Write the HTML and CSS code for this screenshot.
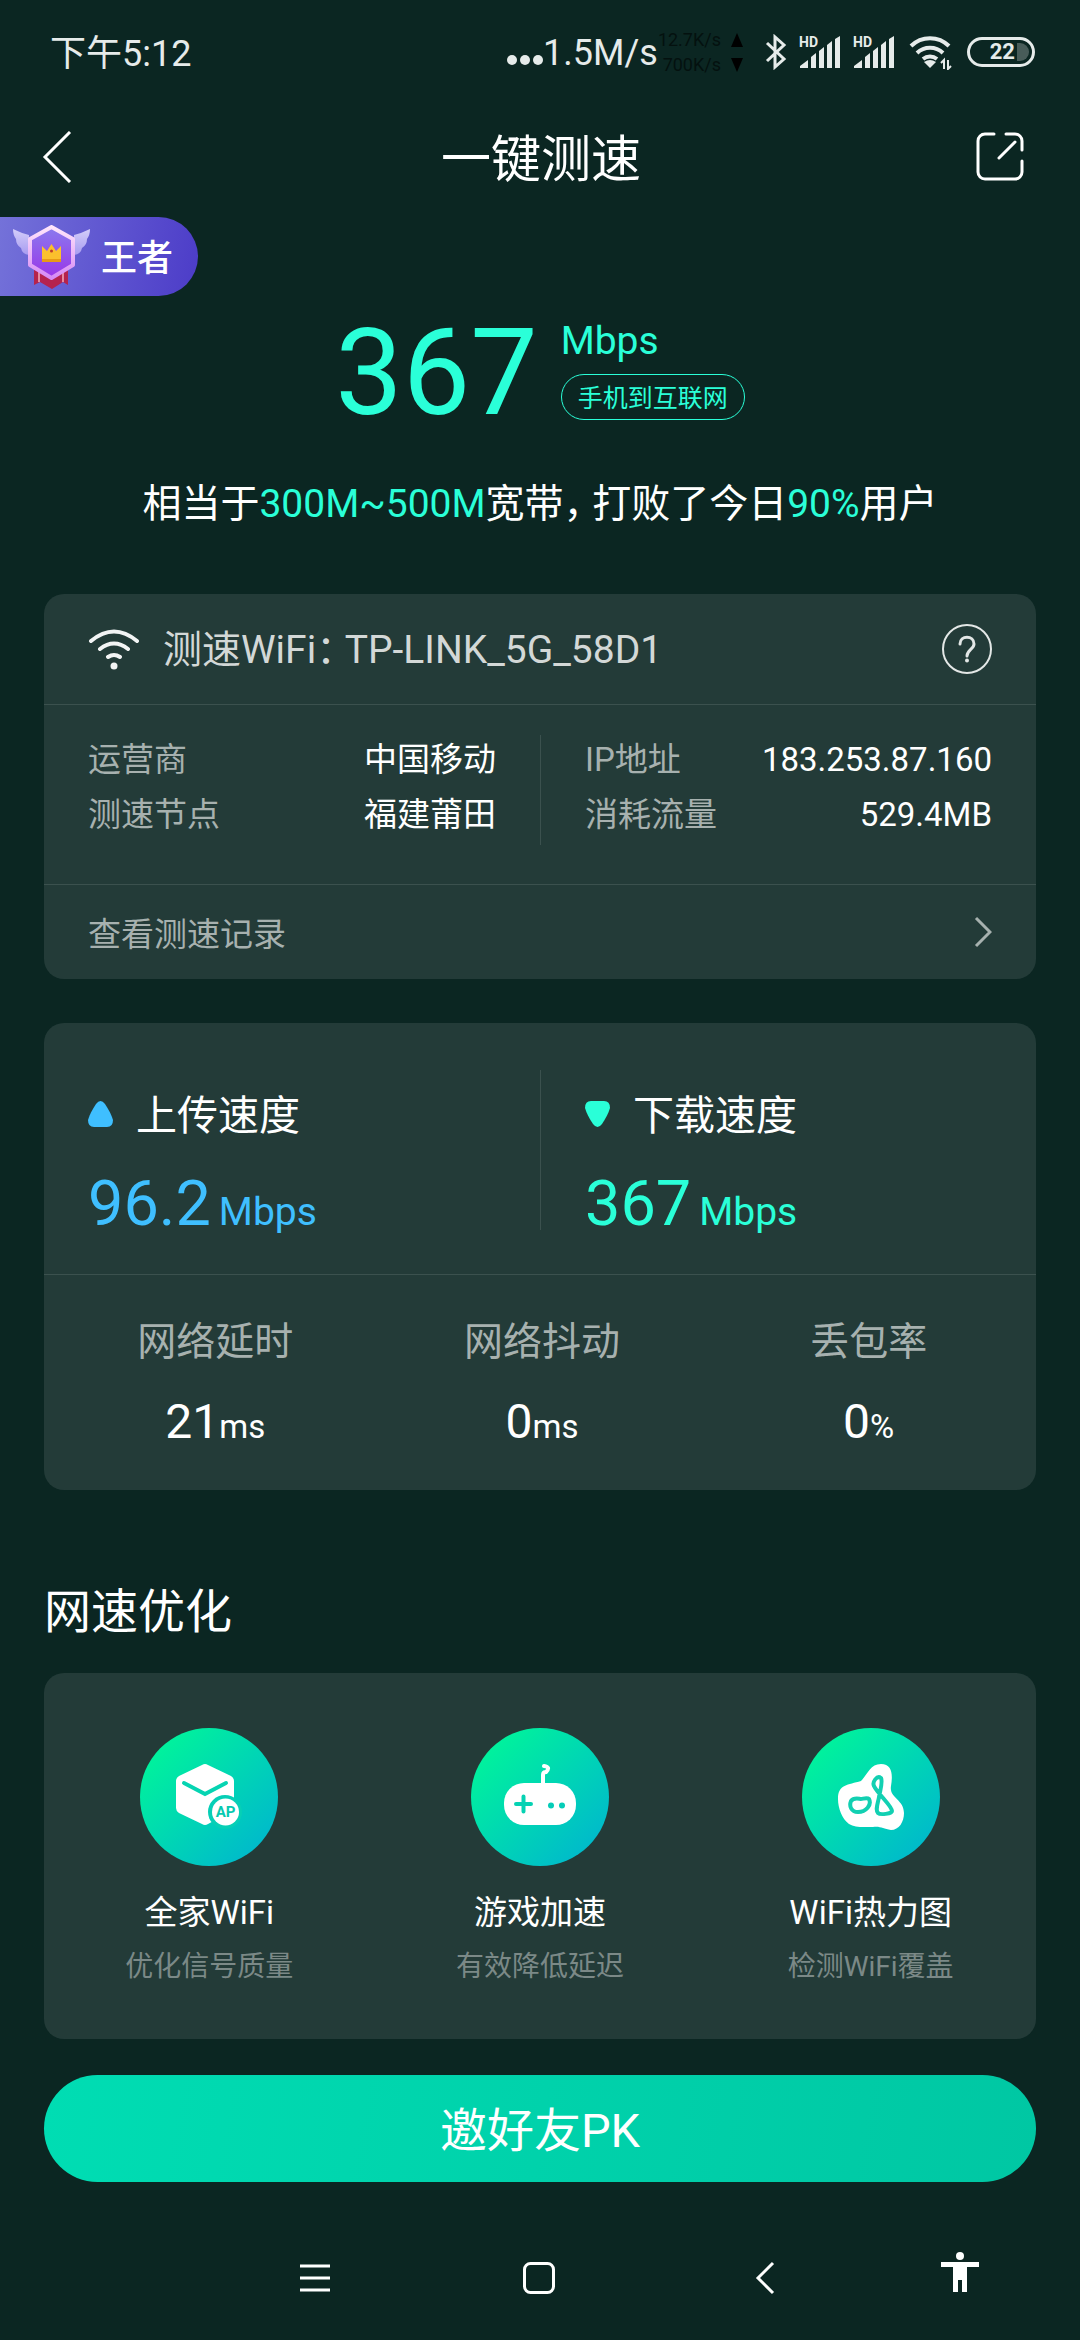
FILE: index.html
```html
<!DOCTYPE html>
<html lang="zh-CN">
<head>
<meta charset="utf-8">
<meta name="viewport" content="width=device-width, initial-scale=1">
<title>一键测速</title>
<link rel="stylesheet" href="styles.css">
</head>
<body>
<div class="status">
  <span class="status-time">下午5:12</span>
  <div class="status-right">
    <svg class="dots" width="36" height="36" viewBox="0 0 36 36" fill="currentColor"><circle cx="5" cy="26" r="5"/><circle cx="18" cy="26" r="5"/><circle cx="31" cy="26" r="5"/></svg>
    <span class="status-rate">1.5M/s</span>
    <div class="traffic">
      <span>12.7K/s</span><svg width="12" height="14" viewBox="0 0 12 14"><path d="M6 0l6 14H0z"/></svg>
      <span>700K/s</span><svg width="12" height="14" viewBox="0 0 12 14"><path d="M6 14L0 0h12z"/></svg>
    </div>
    <svg class="bluetooth" width="22" height="36" viewBox="0 0 22 36" fill="none" stroke="currentColor" stroke-width="3"><path d="M2 9l17 16-9 8V3l9 8L2 27"/></svg>
    <svg class="signal" width="42" height="34" viewBox="0 0 42 34" fill="currentColor"><path d="M1 33v-2l8-6v8zM12 33V22l5-4v15zM20 33V16l5-4v21zM28 33V10l5-4v27zM36 33V4l5-3v32z"/><text class="hd" x="0" y="12">HD</text></svg>
    <svg class="signal" width="42" height="34" viewBox="0 0 42 34" fill="currentColor"><path d="M1 33v-2l8-6v8zM12 33V22l5-4v15zM20 33V16l5-4v21zM28 33V10l5-4v27zM36 33V4l5-3v32z"/><text class="hd" x="0" y="12">HD</text></svg>
    <svg class="wlan" width="44" height="36" viewBox="0 0 44 36" fill="none" stroke="currentColor" stroke-width="4"><path d="M2 12a27 27 0 0 1 38 0M8 19a19 19 0 0 1 26 0M14 25a11 11 0 0 1 14 0"/><path d="M21 34l-6-6q6-4 12 0z" fill="currentColor" stroke="none"/><path d="M35 35v-9l-3 3M39 26v9l3-3" stroke-width="2"/></svg>
    <span class="battery"><span class="battery-level">22</span></span>
  </div>
</div>

<header class="topbar">
  <button class="icon-button" type="button" aria-label="返回"><svg width="32" height="52" viewBox="0 0 32 52" fill="none" stroke="currentColor" stroke-width="3"><path d="M28 1L3 26l25 25"/></svg></button>
  <h1>一键测速</h1>
  <button class="icon-button" type="button" aria-label="分享"><svg width="48" height="50" viewBox="0 0 48 50" fill="none" stroke="currentColor" stroke-width="3" stroke-linecap="round"><path d="M18 2H9a7 7 0 0 0-7 7v31a7 7 0 0 0 7 7h30a7 7 0 0 0 7-7V29M30 2h9a7 7 0 0 1 7 7v9M39 10L23 26"/></svg></button>
</header>

<main>
  <div class="rank">
    <svg width="78" height="64" viewBox="0 0 78 64">
      <defs>
        <linearGradient id="wing" x1="0" y1="0" x2="0" y2="1"><stop offset="0" stop-color="#d3cdfa"/><stop offset="1" stop-color="#a79bf0"/></linearGradient>
        <linearGradient id="gem" x1="0" y1="0" x2="0" y2="1"><stop offset="0" stop-color="#8a7bee"/><stop offset="1" stop-color="#9a35e8"/></linearGradient>
        <linearGradient id="rim" x1="0" y1="0" x2="0" y2="1"><stop offset="0" stop-color="#ffe6fb"/><stop offset="1" stop-color="#d68af5"/></linearGradient>
      </defs>
      <path d="M21 44h34v16l-5-3-11 7-12-7-6 3z" fill="#b5234d"/>
      <path d="M26 46v11M50 46v11" stroke="#e58aa0" stroke-width="2"/>
      <path d="M0 4q8 4 16 6v20q-7-1-8-7-5-3-5-9-3-4-3-10zM77 4q-8 4-16 6v20q7-1 8-7 5-3 5-9 3-4 3-10z" fill="url(#wing)"/>
      <path d="M38.500 2L60 14v26L38.500 53 17 40V14z" fill="url(#gem)" stroke="url(#rim)" stroke-width="4" stroke-linejoin="round"/>
      <path d="M29 21l5 5 4.500-7 4.500 7 5-5v16H29z" fill="#fbc02d"/><path d="M29 34h19v3H29z" fill="#e89a16"/><circle cx="38.500" cy="26" r="1.500" fill="#c0392b"/>
    </svg>
    <span>王者</span>
  </div>

  <section class="hero">
    <strong class="hero-number">367</strong>
    <div class="hero-side"><span class="unit">Mbps</span><span class="pill">手机到互联网</span></div>
  </section>
  <p class="summary">相当于<em>300M~500M</em>宽带<span class="tight">&#xFF0C;</span>打败了今日<em>90%</em>用户</p>

  <section class="card">
    <div class="wifi-row">
      <svg width="52" height="42" viewBox="0 0 52 42" fill="none" stroke="#f2f4f4" stroke-width="4" stroke-linecap="round"><path d="M3 13q23-19 46 0M12 21q14-11 28 0M20 29q6-4 12 0"/><circle cx="26" cy="38" r="3.500" fill="#f2f4f4" stroke="none"/></svg>
      <h2>测速WiFi<span class="tight">&#xFF1A;</span>TP-LINK_5G_58D1</h2>
      <button class="help" type="button" aria-label="帮助"><svg width="50" height="50" viewBox="0 0 50 50" fill="none" stroke="currentColor" stroke-width="2" stroke-linecap="round"><circle cx="25" cy="25" r="24"/><path d="M18 20c0-9 14-9 14 0 0 5-7 6-7 12" stroke-width="3"/><circle cx="25" cy="36.500" r="2" fill="currentColor" stroke="none"/></svg></button>
    </div>
    <div class="pair details">
      <dl>
        <div><dt>运营商</dt><dd>中国移动</dd></div>
        <div><dt>测速节点</dt><dd>福建莆田</dd></div>
      </dl>
      <dl>
        <div><dt>IP地址</dt><dd>183.253.87.160</dd></div>
        <div><dt>消耗流量</dt><dd>529.4MB</dd></div>
      </dl>
    </div>
    <a class="history" href="#history">查看测速记录<svg width="18" height="32" viewBox="0 0 18 32" fill="none" stroke="currentColor" stroke-width="3"><path d="M2 2l14 14L2 30"/></svg></a>
  </section>

  <section class="card">
    <div class="pair speeds">
      <div class="speed upload">
        <h2><svg width="25" height="26" viewBox="0 0 25 26" fill="#3fbfff"><path d="M8 3q4.500-6 9 0 6 9 8 16 0 7-6 7H6q-6 0-6-7 2-7 8-16z"/></svg>上传速度</h2>
        <p><strong>96.2</strong><span class="unit">Mbps</span></p>
      </div>
      <div class="speed download">
        <h2><svg width="25" height="26" viewBox="0 0 25 26" fill="#2affd8"><path d="M8 23q4.500 6 9 0 6-9 8-16 0-7-6-7H6Q0 0 0 7q2 7 8 16z"/></svg>下载速度</h2>
        <p><strong>367</strong><span class="unit">Mbps</span></p>
      </div>
    </div>
    <dl class="metrics">
      <div><dt>网络延时</dt><dd>21<small>ms</small></dd></div>
      <div><dt>网络抖动</dt><dd>0<small>ms</small></dd></div>
      <div><dt>丢包率</dt><dd>0<small>%</small></dd></div>
    </dl>
  </section>

  <h2 class="section-title">网速优化</h2>
  <nav class="card tools">
    <a href="#wifi">
      <svg class="tool-icon" viewBox="0 0 138 138"><path d="M62 37q3-2 6 0l23 11q3 2 3 5v29L68 96q-3 2-6 0L39 85q-3-2-3-5V53q0-3 3-5z" fill="#fff"/><path d="M44 55l21 11 21-11" fill="none" stroke="#06d4b2" stroke-width="4" stroke-linecap="round"/><circle cx="85" cy="84" r="17" fill="#06cfb6"/><circle cx="85.500" cy="84" r="13.500" fill="#fff"/><text class="ap" x="85.500" y="89">AP</text></svg>
      <span class="tool-name">全家WiFi</span><span class="tool-note">优化信号质量</span>
    </a>
    <a href="#game">
      <svg class="tool-icon" viewBox="0 0 138 138"><rect x="33" y="55" width="72" height="42" rx="20" fill="#fff"/><path d="M72 56V47q0-3 3-3 5-5-2-6" fill="none" stroke="#fff" stroke-width="4" stroke-linecap="round"/><path d="M45 76h15M52.500 68.500v15" stroke="#06d2b3" stroke-width="4" stroke-linecap="round"/><circle cx="80" cy="77.500" r="3" fill="#06cdb8"/><circle cx="91" cy="77.500" r="3" fill="#06cdb8"/></svg>
      <span class="tool-name">游戏加速</span><span class="tool-note">有效降低延迟</span>
    </a>
    <a href="#heatmap">
      <svg class="tool-icon" viewBox="0 0 138 138"><path d="M59 53C66 46 68 36 79 36s12 10 10 22 13 13 13 27c0 9-5 17-13 17-8-1-10-4-18-3-9 0-18 1-24-3C40 91 36 80 36 71c0-15 10-14 23-18z" fill="#fff"/><g fill="none" stroke="#12d0b2" stroke-width="4" stroke-linejoin="round"><path d="M49 73c3-4 8-2 10-2s6-2 8 0c3 6-3 13-11 13-7 0-9-6-7-11zM79 50c-4-3-9 4-7 8 3 7 18 20 18 25 0 3-12 4-14 2-3-3 0-10 1-16s4-15 2-19z"/></g></svg>
      <span class="tool-name">WiFi热力图</span><span class="tool-note">检测WiFi覆盖</span>
    </a>
  </nav>
  <button class="invite" type="button">邀好友PK</button>
</main>

<footer class="sysnav">
  <button type="button" aria-label="菜单"><svg width="36" height="56" viewBox="0 0 36 56" stroke="currentColor" stroke-width="3"><path d="M3 16h30M3 28h30M3 40h30"/></svg></button>
  <button type="button" aria-label="主页"><svg width="36" height="56" viewBox="0 0 36 56" fill="none" stroke="currentColor" stroke-width="3"><rect x="3.500" y="13.500" width="29" height="29" rx="6"/></svg></button>
  <button type="button" aria-label="返回"><svg width="36" height="56" viewBox="0 0 36 56" fill="none" stroke="currentColor" stroke-width="3"><path d="M27 13L12 28l15 15"/></svg></button>
  <button type="button" aria-label="无障碍"><svg width="38" height="56" viewBox="0 0 38 56" fill="currentColor"><circle cx="19" cy="6" r="4"/><path d="M0 12h38v5H26v25h-5V30h-4v12h-5V17H0z"/></svg></button>
</footer>
</body>
</html>
```
FILE: styles.css
```css
* { box-sizing: border-box; margin: 0; padding: 0; }

body {
  min-height: 100vh;
  background: #0b2622;
  color: #fff;
  font-family: Roboto, "Noto Sans CJK SC", sans-serif;
  font-weight: 400;
  display: flex;
  flex-direction: column;
}

h1, h2, strong, em, small { font-weight: inherit; font-style: normal; }
button { border: 0; background: none; color: inherit; font: inherit; }
a { color: inherit; text-decoration: none; }
svg { display: block; flex: none; }

/* system status bar */
.status {
  height: 104px;
  padding: 0 45px 0 50px;
  display: flex;
  align-items: center;
  justify-content: space-between;
  color: #e6ebea;
  font-size: 36px;
}
.status-time { padding-bottom: 4px; }
.status-rate { padding-top: 2px; }
.status-right { display: flex; align-items: center; }
.traffic {
  display: grid;
  grid-template-columns: auto 12px;
  column-gap: 10px;
  align-items: center;
  text-align: right;
  font-size: 18px;
  line-height: 25px;
  color: #04110f;
  fill: #000;
}
.bluetooth { margin-left: 22px; }
.signal { margin-left: 12px; }
.hd { font: 700 14px Roboto, sans-serif; }
.wlan { margin-left: 14px; }
.battery {
  width: 68px;
  height: 30px;
  margin-left: 14px;
  padding: 3px;
  border: 3px solid;
  border-radius: 15px;
}
.battery-level {
  display: block;
  height: 18px;
  padding-right: 14px;
  border-radius: 9px;
  background: linear-gradient(90deg, transparent 78%, #485c59 78%);
  font-size: 22px;
  font-weight: 700;
  line-height: 18px;
  text-align: right;
}

/* page header */
.topbar {
  height: 106px;
  padding: 0 56px 0 42px;
  display: grid;
  grid-template-columns: 1fr auto 1fr;
  align-items: center;
}
.topbar h1 { padding: 5px 0 0 16px; font-size: 50px; line-height: 64px; }
.icon-button:last-child { justify-self: end; }
.icon-button:first-child { justify-self: start; }

main { padding: 7px 44px 0; }

.rank {
  width: 198px;
  height: 79px;
  margin-left: -44px;
  padding-left: 13px;
  display: flex;
  align-items: center;
  gap: 10px;
  border-radius: 0 40px 40px 0;
  background: linear-gradient(100deg, #7472d9, #4c3cc8);
  font-size: 36px;
  font-weight: 500;
}
.rank span { padding-bottom: 3px; }

.hero {
  margin-top: 25px;
  display: flex;
  justify-content: center;
  gap: 23px;
  color: #2affd8;
}
.hero-number { font-size: 120px; line-height: 104px; }
.hero-side { display: flex; flex-direction: column; align-items: flex-start; gap: 13px; }
.unit { font-size: 39px; line-height: 40px; }
.pill {
  height: 46px;
  padding: 2px 16px 0;
  border: 1px solid;
  border-radius: 23px;
  font-size: 25px;
  line-height: 44px;
}
.summary {
  margin: 51px 0 62px;
  font-size: 39px;
  line-height: 56px;
  text-align: center;
}
.summary em { color: #2affd8; }
/* half-width form of the punctuation mark, with a small gap after it */
.tight { margin-right: 9px; font-feature-settings: "halt"; }

.card { border-radius: 20px; background: #233b38; }
.card + .card { margin-top: 44px; }

.wifi-row {
  height: 111px;
  padding: 0 44px;
  display: flex;
  align-items: center;
  border-bottom: 1px solid #3b514e;
}
.wifi-row h2 { margin-left: 23px; padding-top: 2px; flex: 1; font-size: 39px; line-height: 56px; color: #d3d8d7; }
.help { color: #e3e7e6; }

.pair {
  display: grid;
  grid-template-columns: 1fr 1fr;
  border-bottom: 1px solid #3b514e;
}
.pair > * { padding: 0 44px; }
.pair > :last-child { border-left: 1px solid #3b514e; }

.details { padding: 30px 0 39px; }
.details dl { height: 110px; font-size: 33px; line-height: 50px; }
.details dl div { margin-bottom: 5px; display: flex; justify-content: space-between; }
.details dt, .history { color: #a7b1af; }

.history {
  height: 94px;
  padding: 0 44px;
  display: flex;
  align-items: center;
  justify-content: space-between;
  font-size: 33px;
}

.speeds { padding: 47px 0 44px; }
.speed { height: 160px; }
.speed h2 {
  margin-top: 16px;
  display: flex;
  align-items: center;
  gap: 23px;
  font-size: 41px;
  line-height: 60px;
}
.speed h2 svg { margin-bottom: 4px; }
.speed p { margin-top: 33px; display: flex; align-items: baseline; gap: 8px; }
.speed strong { font-size: 63px; line-height: 50px; }
.upload p { color: #3fbfff; }
.download p { color: #2affd8; }

.metrics {
  padding: 42px 4px 40px 8px;
  display: grid;
  grid-template-columns: repeat(3, 1fr);
  text-align: center;
}
.metrics dt { font-size: 39px; line-height: 50px; color: #a7b1af; }
.metrics dd { margin-top: 27px; font-size: 48px; line-height: 56px; }
.metrics small { font-size: 33px; line-height: 30px; }

.section-title { margin: 92px 0 31px; font-size: 47px; line-height: 60px; }

.tools {
  padding: 55px 0 52px;
  display: grid;
  grid-template-columns: repeat(3, 1fr);
}
.tools a { display: flex; flex-direction: column; align-items: center; }
.tool-icon {
  width: 138px;
  height: 138px;
  border-radius: 50%;
  background: linear-gradient(135deg, #00f59a 10%, #00b4d0 95%);
}
.ap { font: 700 15px Roboto, sans-serif; fill: #06c9b0; text-anchor: middle; }
.tool-name { margin-top: 25px; font-size: 33px; line-height: 44px; }
.tool-note { margin-top: 12px; font-size: 28px; line-height: 40px; color: #7b8987; }

.invite {
  width: 100%;
  height: 107px;
  margin-top: 36px;
  padding-bottom: 5px;
  border-radius: 54px;
  background: linear-gradient(100deg, #00ddb3, #00c7a3);
  font-size: 47px;
}

/* system navigation bar */
.sysnav {
  height: 124px;
  margin-top: auto;
  padding: 0 36px 0 203px;
  display: grid;
  grid-template-columns: 4fr 4fr 4fr 3fr;
  place-items: center;
}
```
